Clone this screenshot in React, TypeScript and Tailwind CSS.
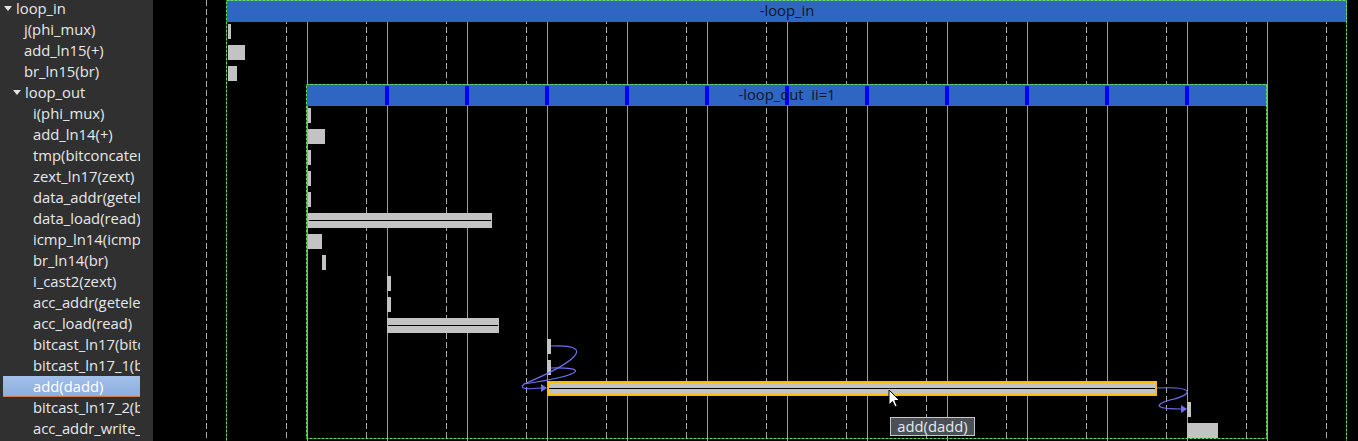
import React from "react"

type Row = { name: string; level: number; group?: boolean; selected?: boolean }

const rows: Row[] = [
  { name: "loop_in", level: 0, group: true },
  { name: "j(phi_mux)", level: 1 },
  { name: "add_ln15(+)", level: 1 },
  { name: "br_ln15(br)", level: 1 },
  { name: "loop_out", level: 1, group: true },
  { name: "i(phi_mux)", level: 2 },
  { name: "add_ln14(+)", level: 2 },
  { name: "tmp(bitconcatenate)", level: 2 },
  { name: "zext_ln17(zext)", level: 2 },
  { name: "data_addr(getelementptr)", level: 2 },
  { name: "data_load(read)", level: 2 },
  { name: "icmp_ln14(icmp)", level: 2 },
  { name: "br_ln14(br)", level: 2 },
  { name: "i_cast2(zext)", level: 2 },
  { name: "acc_addr(getelementptr)", level: 2 },
  { name: "acc_load(read)", level: 2 },
  { name: "bitcast_ln17(bitcast)", level: 2 },
  { name: "bitcast_ln17_1(bitcast)", level: 2 },
  { name: "add(dadd)", level: 2, selected: true },
  { name: "bitcast_ln17_2(bitcast)", level: 2 },
  { name: "acc_addr_write_ln17(write)", level: 2 },
]

// op bars: x start, x end, top, has split line
const ops: [number, number, number, boolean?][] = [
  [228, 231, 24],
  [228, 245, 45],
  [228, 237, 66],
  [308, 311, 108],
  [308, 325, 129],
  [308, 311, 150],
  [308, 311, 171],
  [308, 311, 192],
  [308, 492, 213, true],
  [308, 322, 234],
  [322, 326, 255],
  [387, 391, 276],
  [387, 391, 297],
  [387, 499, 318, true],
  [547, 551, 339],
  [547, 551, 360],
  [1187, 1191, 402],
  [1187, 1218, 423],
]

const font = '"Open Sans", "DejaVu Sans", sans-serif'

function Caret() {
  return (
    <svg width="8" height="5" viewBox="0 0 8 5" className="shrink-0">
      <polygon points="0,0 8,0 4,5" fill="#e4e4e4" />
    </svg>
  )
}

function TreeRow({ row }: { row: Row }) {
  const pad =
    row.group ? (row.level === 0 ? "pl-[4px]" : "pl-[13px]") : row.level === 1 ? "pl-[24px]" : "pl-[33px]"
  return (
    <div
      className={`h-[21px] flex items-center whitespace-nowrap ${pad} ${
        row.selected
          ? "ml-[3px] !pl-[30px] bg-gradient-to-b from-[#a3c0ea] to-[#8dadde] border-b border-[#d07a4a] text-white"
          : "text-[#e6e8ec]"
      }`}
    >
      {row.group && (
        <span className="w-[12px] flex items-center">
          <Caret />
        </span>
      )}
      <span>{row.name}</span>
    </div>
  )
}

function Chart() {
  const dashed = Array.from({ length: 15 }, (_, k) => 206 + 80 * k)
  const solid = Array.from({ length: 13 }, (_, k) => 307 + 80 * k)
  const marks = Array.from({ length: 11 }, (_, k) => 385 + 80 * k)
  const green = "#5ee05a"
  const curve = "#6f6ff0"
  return (
    <svg width="1205" height="441" viewBox="153 0 1205 441" className="block">
      {dashed.map((x) => (
        <line key={x} x1={x + 0.5} x2={x + 0.5} y1={0} y2={441} stroke="#ababab" strokeDasharray="6 3" />
      ))}
      {solid.map((x) => (
        <line key={x} x1={x + 0.5} x2={x + 0.5} y1={0} y2={441} stroke="#a0a0a0" />
      ))}

      {/* loop_in */}
      <rect x={227} y={0} width={1120} height={22} fill="#2f66c3" />
      <rect x={226.5} y={0.5} width={1120} height={460} fill="none" stroke={green} strokeDasharray="3 1" />
      <text x={787} y={16} textAnchor="middle" fontFamily={font} fontSize={14.8} fill="#0f1624">
        -loop_in
      </text>

      {/* loop_out */}
      <rect x={307} y={84} width={960} height={22} fill="#2f66c3" />
      {marks.map((x) => (
        <rect key={x} x={x} y={86} width={4} height={19} fill="#0000ff" />
      ))}
      <rect x={306.5} y={84.5} width={960} height={354} fill="none" stroke={green} strokeDasharray="3 1" />
      <text x={787} y={100} textAnchor="middle" fontFamily={font} fontSize={14.8} fill="#0f1624" xmlSpace="preserve">
        -loop_out  ii=1
      </text>

      {ops.map(([x1, x2, y, line], i) => (
        <g key={i}>
          <rect x={x1} y={y} width={x2 - x1} height={15} fill="#c3c3c3" />
          {line && <rect x={x1 + 1} y={y + 7} width={x2 - x1 - 2} height={1} fill="#000" />}
        </g>
      ))}

      {/* selected add(dadd) */}
      <rect x={547} y={381} width={610} height={15} fill="#f8c000" />
      <rect x={549} y={383} width={606} height={11} fill="#c3c3c3" />
      <rect x={549} y={388} width={606} height={1} fill="#000" />

      {/* dependency curves */}
      <g fill="none" stroke={curve} strokeWidth={1.2}>
        <path d="M551 346 C600 344, 572 364, 524 384" />
        <path d="M551 368 C585 367, 590 374, 524 384" />
        <path d="M524 384 C518 390, 530 389, 541 388" />
        <path d="M1157 388 C1200 386, 1190 396, 1170 400 C1150 406, 1160 409, 1181 409" />
      </g>
      <polygon points="541,384 547,388 541,392" fill={curve} />
      <polygon points="1181,405 1187,409 1181,413" fill={curve} />

      {/* mouse cursor */}
      <path
        d="M889 390 L889 405 L892.5 401.5 L895 407 L897.2 406 L894.8 400.5 L899.5 400.5 Z"
        fill="#fff"
        stroke="#000"
        strokeWidth={1}
        strokeLinejoin="round"
      />
    </svg>
  )
}

export default function App() {
  return (
    <div
      className="relative flex w-[1358px] h-[441px] overflow-hidden bg-black text-[14.8px]"
      style={{ fontFamily: font }}
    >
      <div className="w-[153px] shrink-0 bg-[#303030] overflow-hidden">
        <div className="w-[140px] overflow-hidden -mt-[2px]">
          {rows.map((r) => (
            <TreeRow key={r.name} row={r} />
          ))}
        </div>
      </div>
      <div className="flex-1">
        <Chart />
      </div>
      <div className="absolute left-[890px] top-[417px] w-[85px] h-[19px] bg-[#4b5056] border border-[#c8c8c8] text-[#e4eaf0] flex items-center justify-center leading-none">
        add(dadd)
      </div>
    </div>
  )
}
